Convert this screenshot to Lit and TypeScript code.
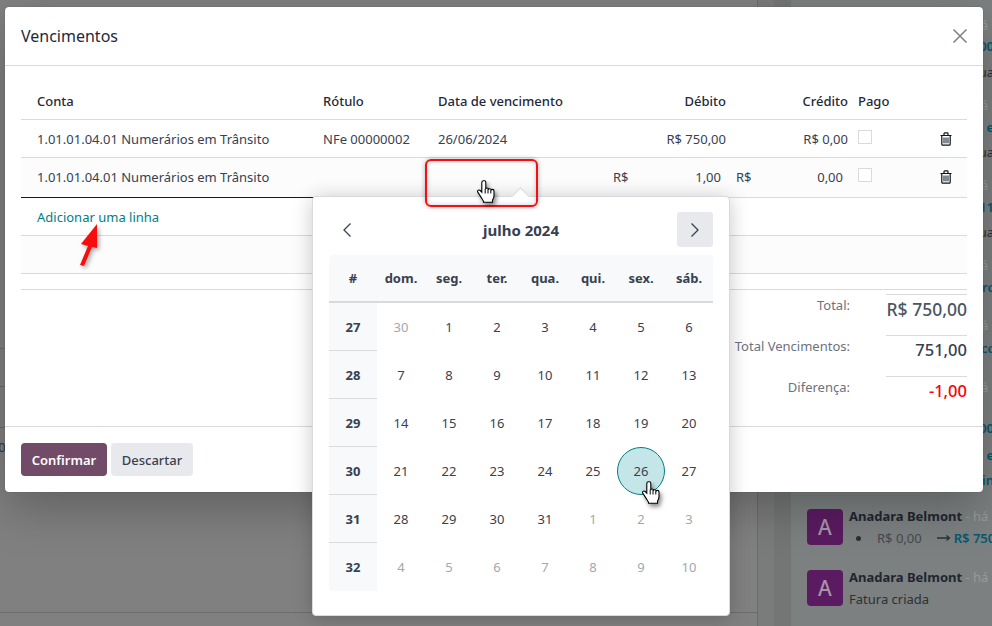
import { LitElement, html, css, svg } from "lit";
import { customElement } from "lit/decorators.js";

type Line = { text: string; gap: number; teal?: boolean };
type Msg = { gap: number; lines: Line[]; change?: boolean };

const MESSAGES: Msg[] = [
  { gap: 0, lines: [{ text: "R$ 750,00", gap: 1, teal: true }, { text: "Fatura atua", gap: 6 }] },
  { gap: 13, lines: [{ text: "Nota de e", gap: 2, teal: true }, { text: "Fatura atua", gap: 5 }] },
  { gap: 13, lines: [{ text: "R$ 811", gap: 2, teal: true }, { text: "Fatura atua", gap: 5 }] },
  { gap: 13, lines: [{ text: "Perc", gap: 2, teal: true }] },
  { gap: 18, lines: [{ text: "Acc", gap: 3, teal: true }] },
  { gap: 19, lines: [{ text: "R$ 750,00", gap: 21, teal: true }, { text: "Nota de e", gap: 7, teal: true }, { text: "Origin", gap: 5, teal: true }] },
  { gap: 16, lines: [], change: true },
  { gap: 19, lines: [{ text: "Fatura criada", gap: 2 }] },
];

const WEEKDAYS = ["#", "dom.", "seg.", "ter.", "qua.", "qui.", "sex.", "sáb."];
const WEEKS: { n: number; days: [number, boolean][] }[] = [
  { n: 27, days: [[30, true], [1, false], [2, false], [3, false], [4, false], [5, false], [6, false]] },
  { n: 28, days: [[7, false], [8, false], [9, false], [10, false], [11, false], [12, false], [13, false]] },
  { n: 29, days: [[14, false], [15, false], [16, false], [17, false], [18, false], [19, false], [20, false]] },
  { n: 30, days: [[21, false], [22, false], [23, false], [24, false], [25, false], [26, false], [27, false]] },
  { n: 31, days: [[28, false], [29, false], [30, false], [31, false], [1, true], [2, true], [3, true]] },
  { n: 32, days: [[4, true], [5, true], [6, true], [7, true], [8, true], [9, true], [10, true]] },
];

const hand = () => svg`<svg class="hand-svg" width="18" height="23" viewBox="0 0 18 23">
  <path d="M6.5 .7c-1 0-1.7.8-1.7 1.8v9.6L3.2 10.5c-.8-.7-1.9-.7-2.4 0-.4.5-.3 1.3.1 1.9l3.4 5.2c.9 1.4 1.6 2.4 2.2 3.6V22.3h9V20c.9-1.2 1.5-2.6 1.5-4.2V11c0-1-.7-1.6-1.5-1.6-.5 0-.9.2-1.2.5-.2-.8-.8-1.2-1.5-1.2-.5 0-.9.2-1.2.5-.2-.8-.8-1.2-1.5-1.2-.5 0-.9.2-1.3.5V2.5c0-1-.6-1.8-1.3-1.8z" fill="#fff" stroke="#000" stroke-width="1.100"/>
  <path d="M8.200 8.500v5M11 9v4.500M13.800 10v3.500" fill="none" stroke="#000" stroke-width="1"/>
</svg>`;

const trash = () => svg`<svg width="12" height="14" viewBox="0 0 12 14">
  <path d="M.5 3.500h11M4 3.500V1.700c0-.5.3-.8.8-.8h2.400c.5 0 .8.3.8.8v1.800M1.800 3.500v8.700c0 .6.4 1 1 1h6.400c.6 0 1-.4 1-1V3.500" fill="none" stroke="#0b1220" stroke-width="1.200"/>
  <path d="M4 5.500v5.800M6 5.500v5.800M8 5.500v5.800" fill="none" stroke="#0b1220" stroke-width="1"/>
</svg>`;

@customElement("app-root")
export class AppRoot extends LitElement {
  static styles = css`
    :host {
      display: block;
      width: 992px;
      height: 626px;
      font-family: "Noto Sans", sans-serif;
      font-size: 13px;
      color: #374151;
    }
    * { box-sizing: border-box; }
    .page {
      position: relative;
      display: flex;
      width: 992px;
      height: 626px;
      overflow: hidden;
      background: #808080;
    }

    /* page behind the dialog */
    .main {
      width: 757px;
      flex: none;
      padding-top: 348px;
      display: flex;
      flex-direction: column;
    }
    .bg-row { border-top: 1px solid #6c6c6c; height: 38px; }
    .bg-row.r2 { height: 41px; }
    .bg-row.r3 { height: 185px; padding-top: 9px; line-height: 20px; color: #2f3437; white-space: nowrap; }
    .bg-row.r3 span { display: block; margin-left: -20px; }
    .bg-row.r4 { height: 14px; }
    .divider { width: 17px; flex: none; border-left: 1px solid #6c6c6c; background: #7a7b7b; }
    .band { width: 17px; flex: none; background: #747676; }
    .chatter {
      flex: 1;
      min-width: 0;
      background: #7c8080;
      padding: 15px 0 0 16px;
      overflow: hidden;
    }
    .msg { display: flex; gap: 6px; white-space: nowrap; }
    .avatar {
      flex: none;
      width: 36px;
      height: 36px;
      margin-top: 3px;
      border-radius: 4px;
      background: #5a1b60;
      color: #a893ab;
      font-size: 21px;
      font-weight: 500;
      display: flex;
      align-items: center;
      justify-content: center;
    }
    .msg-body { width: 145px; flex: none; }
    .name { height: 20px; line-height: 20px; font-weight: 700; color: #1f2630; }
    .when { font-weight: 400; color: #9a9a9a; }
    .line { height: 20px; line-height: 20px; color: #2c3033; display: flex; justify-content: flex-end; }
    .line.teal { color: #07586e; font-weight: 600; }
    .line.fatura { justify-content: flex-start; }
    .change { height: 20px; line-height: 20px; margin-top: 2px; display: flex; align-items: center; color: #45494f; }
    .bullet { width: 5px; height: 5px; border-radius: 50%; background: #2c3033; margin: 0 16px 0 7px; flex: none; }
    .change svg { margin: 0 3px 0 15px; flex: none; }
    .change b { color: #07586e; font-weight: 600; }

    /* dialog */
    .modal {
      position: absolute;
      left: 5px;
      top: 7px;
      width: 978px;
      height: 485px;
      background: #fff;
      border-radius: 4px;
      box-shadow: 0 0 1px #444, 0 16px 48px rgba(0, 0, 0, 0.25);
      display: flex;
      flex-direction: column;
    }
    .modal-head {
      height: 59px;
      flex: none;
      border-bottom: 1px solid #d8dadd;
      padding: 0 15px 0 16px;
      display: flex;
      align-items: center;
      justify-content: space-between;
    }
    .title { font-size: 16px; font-weight: 400; color: #1f2937; }
    .modal-body { flex: 1; min-height: 0; padding: 16px 16px 0; }
    .row {
      display: grid;
      grid-template-columns: 294px 115px 170px 134px 122px 50px 61px;
      align-items: center;
      border-bottom: 1px solid #d8dadd;
      height: 38px;
      white-space: nowrap;
    }
    .row > div { padding: 0 8px; }
    .row > div:first-child { padding-left: 16px; }
    .row .num { text-align: right; }
    .row .pago { padding: 0 0 0 2px; }
    .row .del { padding: 0 15px 0 0; display: flex; justify-content: flex-end; }
    .row.head { font-weight: 500; color: #1f2937; }
    .row.edit { height: 40px; padding-bottom: 2px; background: #fcfcfc; border-image: linear-gradient(to right, #111827 50%, #d8dadd 50%) 1; }
    .row.edit .amount { display: flex; justify-content: space-between; padding-left: 13px; padding-right: 13px; }
    .row.edit .amount.credit { padding-left: 2px; }
    .check { display: block; width: 14px; height: 14px; margin-top: -3px; border: 1px solid #d8dadd; background: #fff; }
    .add { height: 38px; border-bottom: 1px solid #d8dadd; padding-left: 16px; display: flex; align-items: center; color: #017e84; }
    .blank { height: 38px; border-bottom: 1px solid #d8dadd; background: #fcfcfc; }
    .blank.short { height: 16px; background: #fff; }
    .totals {
      margin-top: 4px;
      display: grid;
      grid-template-columns: auto 81px;
      column-gap: 36px;
      justify-content: end;
      grid-auto-rows: 41px;
    }
    .t-label { text-align: right; line-height: 20px; padding-top: 1px; color: #6b7280; }
    .t-value { border-top: 1px solid #d8dadd; text-align: right; font-size: 16.500px; font-weight: 500; line-height: 24px; padding-top: 2px; white-space: nowrap; }
    .t-value.total { color: #4b5563; font-size: 17.500px; }
    .t-value.diff { color: #ff0000; }
    .modal-foot {
      height: 66px;
      flex: none;
      border-top: 1px solid #d8dadd;
      padding: 16px;
      display: flex;
      gap: 4px;
      align-items: flex-start;
    }
    .btn {
      height: 33px;
      border: 0;
      border-radius: 4px;
      font: inherit;
      font-weight: 500;
      display: flex;
      align-items: center;
      justify-content: center;
    }
    .btn.primary { width: 86px; background: #714b67; color: #fff; font-weight: 600; }
    .btn.secondary { width: 82px; background: #e7e9ed; color: #374151; }

    /* date picker */
    .picker {
      position: absolute;
      left: 312px;
      top: 196px;
      width: 418px;
      height: 420px;
      background: #fff;
      border: 1px solid #d8dadd;
      border-radius: 4px;
      padding: 15px 16px 0;
      box-shadow: 0 2px 20px rgba(0, 0, 0, 0.22);
    }
    .tip {
      position: absolute;
      left: 201px;
      top: -7px;
      width: 13px;
      height: 13px;
      background: #fff;
      border-left: 1px solid #d8dadd;
      border-top: 1px solid #d8dadd;
      transform: rotate(45deg);
    }
    .cal-head { display: flex; align-items: center; justify-content: space-between; height: 35px; margin-bottom: 8px; }
    .nav { width: 36px; height: 35px; border-radius: 3px; display: flex; align-items: center; justify-content: center; }
    .nav.on { background: #e7e9ed; }
    .month { font-size: 15px; font-weight: 700; color: #374151; padding-top: 1px; }
    .cal { display: grid; grid-template-columns: repeat(8, 48px); grid-auto-rows: 48px; }
    .cal > div { display: flex; align-items: center; justify-content: center; }
    .wd { background: #f8f9fa; font-weight: 700; border-bottom: 2px solid #d8dadd; }
    .wd:first-child { border-top-left-radius: 4px; }
    .wd:nth-child(8) { border-top-right-radius: 4px; }
    .wk { background: #f8f9fa; font-weight: 700; border-bottom: 1px solid #d8dadd; }
    .wk.last { border-bottom: 0; border-bottom-left-radius: 4px; }
    .muted { color: #a3a7ae; }
    .today { background: #c5e6e8; border: 1px solid #017e84; border-radius: 50%; }

    /* annotations drawn over the screenshot */
    .mark {
      position: absolute;
      left: 425px;
      top: 159px;
      width: 113px;
      height: 48px;
      border: 2px solid #f50f14;
      border-radius: 6px;
      box-shadow: 0 0 5px rgba(0, 0, 0, 0.3), inset 0 0 5px rgba(0, 0, 0, 0.2);
    }
    .hand { position: absolute; line-height: 0; filter: drop-shadow(2px 3px 2px rgba(0, 0, 0, 0.45)); }
    .hand.h1 { left: 477px; top: 180px; }
    .hand.h2 { left: 642px; top: 481px; }
    .arrow { position: absolute; left: 76px; top: 222px; line-height: 0; filter: drop-shadow(2px 2px 2px rgba(0, 0, 0, 0.35)); }
  `;

  private chevron(left: boolean) {
    return svg`<svg width="10" height="16" viewBox="0 0 10 16"><path d="${left ? "M8.500 1.500 2 8l6.500 6.500" : "M1.500 1.500 8 8l-6.500 6.500"}" fill="none" stroke="#374151" stroke-width="1.300"/></svg>`;
  }

  render() {
    return html`
      <div class="page">
        <div class="main">
          <div class="bg-row"></div>
          <div class="bg-row r2"></div>
          <div class="bg-row r3"><span>1,00</span></div>
          <div class="bg-row r4"></div>
        </div>
        <div class="divider"></div>
        <div class="band"></div>
        <div class="chatter">
          ${MESSAGES.map(
            (m) => html`
              <div class="msg" style="margin-top:${m.gap}px">
                <div class="avatar">A</div>
                <div class="msg-body">
                  <div class="name">Anadara Belmont <span class="when">- há</span></div>
                  ${m.change
                    ? html`<div class="change">
                        <span class="bullet"></span>R$ 0,00
                        <svg width="14" height="8" viewBox="0 0 14 8"><path d="M0 4h12M9.500 1.500 12.500 4l-3 2.500" fill="none" stroke="#2c3033" stroke-width="1.300"/></svg>
                        <b>R$ 750,00</b>
                      </div>`
                    : m.lines.map(
                        (l) => html`<div
                          class="line ${l.teal ? "teal" : ""} ${l.text === "Fatura criada" ? "fatura" : ""}"
                          style="margin-top:${l.gap}px"
                        >${l.text}</div>`
                      )}
                </div>
              </div>
            `
          )}
        </div>

        <div class="modal">
          <div class="modal-head">
            <span class="title">Vencimentos</span>
            <svg width="16" height="16" viewBox="0 0 16 16"><path d="M1.500 1.500l13 13M14.500 1.500l-13 13" fill="none" stroke="#7c7f85" stroke-width="1.500"/></svg>
          </div>
          <div class="modal-body">
            <div class="row head">
              <div>Conta</div><div>Rótulo</div><div>Data de vencimento</div>
              <div class="num">Débito</div><div class="num">Crédito</div><div class="pago">Pago</div><div></div>
            </div>
            <div class="row">
              <div>1.01.01.04.01 Numerários em Trânsito</div><div>NFe 00000002</div><div>26/06/2024</div>
              <div class="num">R$ 750,00</div><div class="num">R$ 0,00</div>
              <div class="pago"><span class="check"></span></div><div class="del">${trash()}</div>
            </div>
            <div class="row edit">
              <div>1.01.01.04.01 Numerários em Trânsito</div><div></div><div></div>
              <div class="amount"><span>R$</span><span>1,00</span></div>
              <div class="amount credit"><span>R$</span><span>0,00</span></div>
              <div class="pago"><span class="check"></span></div><div class="del">${trash()}</div>
            </div>
            <div class="add">Adicionar uma linha</div>
            <div class="blank"></div>
            <div class="blank short"></div>
            <div class="totals">
              <div class="t-label">Total:</div><div class="t-value total">R$ 750,00</div>
              <div class="t-label">Total Vencimentos:</div><div class="t-value">751,00</div>
              <div class="t-label">Diferença:</div><div class="t-value diff">-1,00</div>
            </div>
          </div>
          <div class="modal-foot">
            <button class="btn primary">Confirmar</button>
            <button class="btn secondary">Descartar</button>
          </div>
        </div>

        <div class="picker">
          <div class="tip"></div>
          <div class="cal-head">
            <div class="nav">${this.chevron(true)}</div>
            <div class="month">julho 2024</div>
            <div class="nav on">${this.chevron(false)}</div>
          </div>
          <div class="cal">
            ${WEEKDAYS.map((d) => html`<div class="wd">${d}</div>`)}
            ${WEEKS.map(
              (w, i) => html`
                <div class="wk ${i === WEEKS.length - 1 ? "last" : ""}">${w.n}</div>
                ${w.days.map(
                  ([d, muted]) =>
                    html`<div class="${muted ? "muted" : ""} ${w.n === 30 && d === 26 ? "today" : ""}">${d}</div>`
                )}
              `
            )}
          </div>
        </div>

        <div class="mark"></div>
        <div class="hand h1">${hand()}</div>
        <div class="hand h2">${hand()}</div>
        <div class="arrow">
          <svg width="24" height="46" viewBox="0 0 24 46"><path d="M21 2 5 22l7 2-8 19 4 1 8-19 5 1z" fill="#f80d0d"/></svg>
        </div>
      </div>
    `;
  }
}
